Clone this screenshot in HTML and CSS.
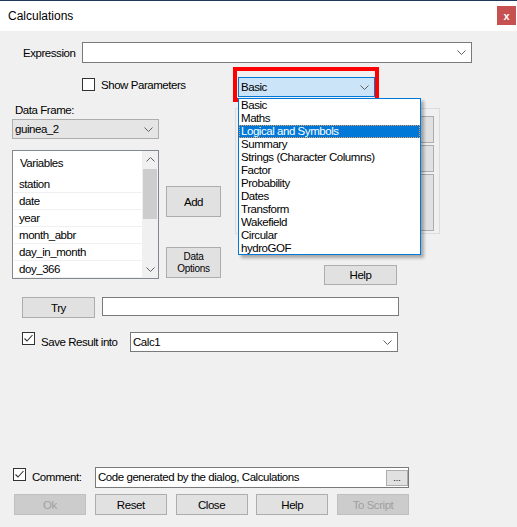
FILE: index.html
```html
<!DOCTYPE html>
<html lang="en">
<head>
    <meta charset="UTF-8">
    <title>Calculations</title>
    <link rel="stylesheet" href="styles.css">
</head>
<body>
    <div class="window">
        <div class="titlebar">
            <span class="title">Calculations</span>
            <span class="close-btn">x</span>
        </div>
        <div class="dialog">
            <div class="expr-row">
                <span class="expr-label">Expression</span>
                <div class="combo expr-combo">
                    <span></span>
                    <svg class="chev" width="9" height="5" viewBox="0 0 9 5"><polyline points="0.5,0.5 4.5,4.5 8.5,0.5"/></svg>
                </div>
            </div>

            <div class="middle">
                <div class="left-pane">
                    <div class="show-row">
                        <span class="checkbox"></span>
                        <span class="check-label">Show Parameters</span>
                    </div>
                    <div class="df-label">Data Frame:</div>
                    <div class="combo grey df-combo">
                        <span>guinea_2</span>
                        <svg class="chev" width="9" height="5" viewBox="0 0 9 5"><polyline points="0.5,0.5 4.5,4.5 8.5,0.5"/></svg>
                    </div>
                    <div class="vars-area">
                        <div class="listbox">
                            <div class="list-items">
                                <div class="list-header">Variables</div>
                                <div class="list-item">station</div>
                                <div class="list-item">date</div>
                                <div class="list-item">year</div>
                                <div class="list-item">month_abbr</div>
                                <div class="list-item">day_in_month</div>
                                <div class="list-item">doy_366</div>
                            </div>
                            <div class="scrollbar">
                                <div class="arrow">
                                    <svg width="9" height="5" viewBox="0 0 9 5"><polyline points="0.5,4.5 4.5,0.5 8.5,4.5"/></svg>
                                </div>
                                <div class="thumb"></div>
                                <div class="track"></div>
                                <div class="arrow">
                                    <svg width="9" height="5" viewBox="0 0 9 5"><polyline points="0.5,0.5 4.5,4.5 8.5,0.5"/></svg>
                                </div>
                            </div>
                        </div>
                        <div class="side-buttons">
                            <button class="btn add-btn">Add</button>
                            <button class="btn data-btn">Data<br>Options</button>
                        </div>
                    </div>
                </div>

                <div class="right-pane">
                    <div class="basic-wrap">
                        <div class="combo basic-combo">
                            <span>Basic</span>
                            <svg class="chev" width="9" height="5" viewBox="0 0 9 5"><polyline points="0.5,0.5 4.5,4.5 8.5,0.5"/></svg>
                        </div>
                        <div class="highlight"></div>
                        <ul class="dropdown">
                            <li>Basic</li>
                            <li>Maths</li>
                            <li class="selected">Logical and Symbols</li>
                            <li>Summary</li>
                            <li>Strings (Character Columns)</li>
                            <li>Factor</li>
                            <li>Probability</li>
                            <li>Dates</li>
                            <li>Transform</li>
                            <li>Wakefield</li>
                            <li>Circular</li>
                            <li>hydroGOF</li>
                        </ul>
                    </div>
                    <div class="group-box">
                        <button class="btn key-btn"></button>
                        <button class="btn key-btn"></button>
                        <button class="btn key-btn tall"></button>
                    </div>
                    <button class="btn help-btn">Help</button>
                </div>
            </div>

            <div class="try-row">
                <button class="btn try-btn">Try</button>
                <div class="textbox try-box"></div>
            </div>

            <div class="save-row">
                <span class="checkbox checked">
                    <svg width="11" height="11" viewBox="0 0 11 11"><polyline points="1.5,5.5 4,8 9.5,2"/></svg>
                </span>
                <span class="save-label">Save Result into</span>
                <div class="combo save-combo">
                    <span>Calc1</span>
                    <svg class="chev" width="9" height="5" viewBox="0 0 9 5"><polyline points="0.5,0.5 4.5,4.5 8.5,0.5"/></svg>
                </div>
            </div>

            <div class="bottom">
                <div class="comment-row">
                    <span class="checkbox checked">
                        <svg width="11" height="11" viewBox="0 0 11 11"><polyline points="1.5,5.5 4,8 9.5,2"/></svg>
                    </span>
                    <span class="comment-label">Comment:</span>
                    <div class="textbox comment-box">
                        <span>Code generated by the dialog, Calculations</span>
                        <button class="btn dots-btn">...</button>
                    </div>
                </div>
                <div class="btn-row">
                    <button class="btn disabled">Ok</button>
                    <button class="btn">Reset</button>
                    <button class="btn">Close</button>
                    <button class="btn">Help</button>
                    <button class="btn disabled">To Script</button>
                </div>
            </div>
        </div>
    </div>
</body>
</html>
```

FILE: styles.css
```css
body {
    margin: 0;
    background: #f0f0f0;
    font-family: "Liberation Sans", Arial, sans-serif;
    font-size: 11.5px;
    letter-spacing: -0.45px;
    color: #000;
}

.window {
    width: 517px;
    height: 527px;
    overflow: hidden;
}

.titlebar {
    height: 30px;
    border-top: 1px solid #1f3b5c;
    background: #fff;
    display: flex;
    align-items: center;
    justify-content: space-between;
}

.title {
    padding-left: 8px;
    font-size: 12px;
    letter-spacing: 0;
}

.close-btn {
    width: 19px;
    height: 19px;
    margin-right: 1px;
    margin-top: -1px;
    background: #c75050;
    color: #fff;
    font-weight: bold;
    font-size: 11px;
    letter-spacing: 0;
    display: flex;
    align-items: center;
    justify-content: center;
}

.dialog {
    height: 496px;
    display: flex;
    flex-direction: column;
}

/* generic controls */
.combo {
    display: flex;
    align-items: center;
    justify-content: space-between;
    box-sizing: border-box;
    height: 20px;
    border: 1px solid #7a7a7a;
    background: #fff;
    padding: 0 5px 0 2px;
}

.combo.grey {
    background: #e5e5e5;
    border-color: #adadad;
}

.chev polyline,
.arrow polyline {
    fill: none;
    stroke: #606060;
    stroke-width: 1;
}

.textbox {
    box-sizing: border-box;
    border: 1px solid #7a7a7a;
    background: #fff;
}

.btn {
    box-sizing: border-box;
    background: #e1e1e1;
    border: 1px solid #adadad;
    font-family: inherit;
    font-size: 11.5px;
    letter-spacing: -0.45px;
    color: #000;
    padding: 0;
    margin: 0;
}

.btn.disabled {
    background: #cccccc;
    border-color: #bfbfbf;
    color: #a0a0a0;
}

.checkbox {
    box-sizing: border-box;
    width: 13px;
    height: 13px;
    border: 1px solid #333;
    background: #fff;
    display: flex;
    align-items: center;
    justify-content: center;
    flex: none;
}

.checkbox polyline {
    fill: none;
    stroke: #333;
    stroke-width: 1.1;
}

/* expression */
.expr-row {
    display: flex;
    align-items: center;
    margin-top: 11px;
    padding-left: 23px;
    height: 21px;
}

.expr-label {
    width: 59px;
}

.expr-combo {
    width: 390px;
    height: 21px;
}

/* middle part */
.middle {
    display: flex;
}

.left-pane {
    width: 233px;
}

.show-row {
    display: flex;
    align-items: center;
    margin-top: 15px;
    padding-left: 82px;
    height: 13px;
}

.check-label {
    margin-left: 6px;
}

.df-label {
    margin-top: 12px;
    padding-left: 15px;
    line-height: 14px;
}

.df-combo {
    margin: 2px 0 0 12px;
    width: 147px;
}

.vars-area {
    display: flex;
    margin-top: 11px;
    padding-left: 12px;
}

.listbox {
    width: 147px;
    height: 129px;
    box-sizing: border-box;
    border: 1px solid #828790;
    background: #fff;
    display: flex;
    overflow: hidden;
}

.list-items {
    flex: 1;
    padding-left: 1px;
}

.list-header {
    height: 25px;
    line-height: 25px;
    padding-left: 6px;
}

.list-item {
    height: 16px;
    line-height: 16px;
    border-bottom: 1px solid #f0f0f0;
    padding-left: 5px;
}

.scrollbar {
    width: 16px;
    background: #f0f0f0;
    display: flex;
    flex-direction: column;
}

.arrow {
    height: 17px;
    display: flex;
    align-items: center;
    justify-content: center;
}

.thumb {
    height: 50px;
    margin: 1px 1px 0 1px;
    background: #cdcdcd;
}

.track {
    flex: 1;
}

.side-buttons {
    display: flex;
    flex-direction: column;
    margin-left: 7px;
}

.add-btn {
    width: 55px;
    height: 31px;
    margin-top: 36px;
}

.data-btn {
    width: 55px;
    height: 31px;
    margin-top: 30px;
    font-size: 10px;
    letter-spacing: -0.3px;
    line-height: 12px;
}

.right-pane {
    display: flex;
    flex-direction: column;
    align-items: flex-start;
}

.basic-wrap {
    position: relative;
    margin-top: 14px;
    margin-left: 5px;
    width: 137px;
    height: 20px;
}

.basic-combo {
    width: 137px;
    background: #cce4f7;
    border-color: #0078d7;
}

.highlight {
    position: absolute;
    left: -5px;
    top: -10px;
    width: 146px;
    height: 35px;
    box-sizing: border-box;
    border: 4px solid #f00;
}

.dropdown {
    position: absolute;
    left: 0;
    top: 21px;
    width: 183px;
    height: 157px;
    box-sizing: border-box;
    margin: 0;
    padding: 0;
    list-style: none;
    background: #fff;
    border: 1px solid #0078d7;
    box-shadow: 3px 3px 3px rgba(0, 0, 0, 0.3);
    z-index: 2;
}

.dropdown li {
    height: 13px;
    line-height: 13px;
    padding-left: 2px;
    white-space: nowrap;
}

.dropdown li.selected {
    background: #0078d7;
    color: #fff;
    outline: 1px dotted #e8a060;
    outline-offset: -1px;
}

.group-box {
    margin-top: 11px;
    margin-left: 2px;
    width: 205px;
    height: 126px;
    box-sizing: border-box;
    border: 1px solid #dcdcdc;
    display: flex;
    flex-direction: column;
    align-items: flex-end;
    gap: 2px;
    padding: 7px 5px 0 0;
}

.key-btn {
    width: 90px;
    height: 27px;
}

.key-btn.tall {
    height: 57px;
}

.help-btn {
    margin-top: 31px;
    margin-left: 91px;
    width: 73px;
    height: 20px;
}

/* try / save */
.try-row {
    display: flex;
    margin-top: 12px;
    padding-left: 22px;
}

.try-btn {
    width: 73px;
    height: 21px;
}

.try-box {
    margin-left: 7px;
    width: 297px;
    height: 19px;
}

.save-row {
    display: flex;
    align-items: flex-start;
    margin-top: 14px;
    padding-left: 22px;
}

.save-label {
    width: 95px;
    padding-left: 6px;
    box-sizing: border-box;
    line-height: 21px;
    white-space: nowrap;
}

.save-combo {
    width: 268px;
}

/* bottom */
.bottom {
    margin-top: auto;
    padding-bottom: 12px;
}

.comment-row {
    display: flex;
    align-items: flex-start;
    padding-left: 13px;
}

.comment-row .checkbox {
    margin-top: 1px;
}

.comment-label {
    width: 69px;
    padding-left: 6px;
    box-sizing: border-box;
    line-height: 20px;
    white-space: nowrap;
}

.comment-box {
    position: relative;
    width: 314px;
    height: 21px;
    line-height: 19px;
    padding-left: 2px;
}

.dots-btn {
    position: absolute;
    right: 0;
    top: 2px;
    width: 22px;
    height: 16px;
    font-size: 9px;
    letter-spacing: 0;
    line-height: 12px;
}

.btn-row {
    display: flex;
    gap: 8.75px;
    margin-top: 6px;
    padding-left: 14px;
}

.btn-row .btn {
    width: 72px;
    height: 21px;
}
```
